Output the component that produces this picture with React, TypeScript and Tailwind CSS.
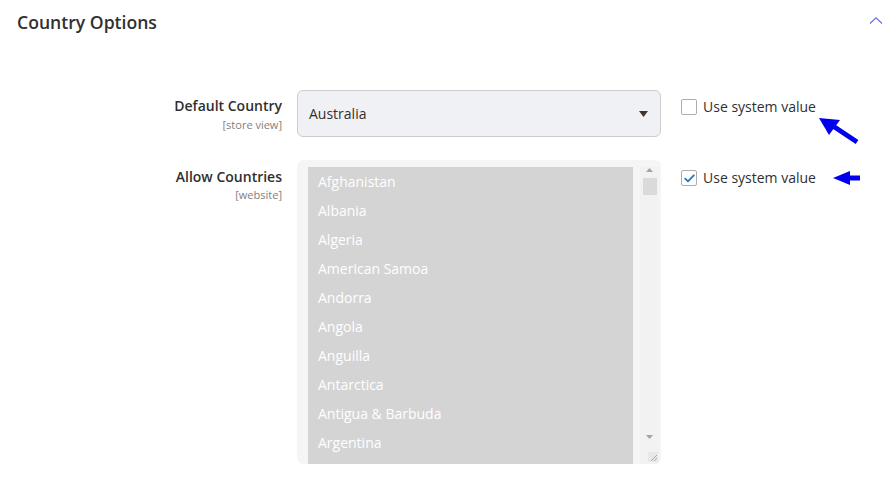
import React from "react";

const countries = [
  "Afghanistan",
  "Albania",
  "Algeria",
  "American Samoa",
  "Andorra",
  "Angola",
  "Anguilla",
  "Antarctica",
  "Antigua & Barbuda",
  "Argentina",
];

function Checkbox({ checked }: { checked?: boolean }) {
  return (
    <span className="flex h-4 w-4 items-center justify-center rounded-[2px] border border-[#adadad] bg-white">
      {checked && (
        <svg width="11" height="9" viewBox="0 0 11 9" fill="none">
          <path d="M1.2 4.6 L4 7.3 L9.8 1.3" stroke="#1979c3" strokeWidth="1.8" strokeLinecap="round" strokeLinejoin="round" />
        </svg>
      )}
    </span>
  );
}

function SystemValue({ checked }: { checked?: boolean }) {
  return (
    <label className="flex items-center gap-[6px] text-[14px] leading-[18px] text-[#303030]">
      <Checkbox checked={checked} />
      Use system value
    </label>
  );
}

export default function App() {
  return (
    <div className="relative h-[481px] w-[894px] overflow-hidden bg-white font-['Open_Sans',sans-serif]">
      {/* Section header */}
      <div className="flex h-[44px] items-center justify-between pl-[17px] pr-[10px]">
        <h2 className="text-[17.6px] font-semibold text-[#303030]">Country Options</h2>
        <svg width="16" height="10" viewBox="0 0 16 10" className="mt-[-2px]">
          <path d="M2 7.5 L8 1.8 L14 7.5" stroke="#6b6bf0" strokeWidth="1.2" fill="none" />
        </svg>
      </div>

      <div className="mt-[46px] flex flex-col gap-[23px]">
        {/* Default Country */}
        <div className="flex items-start">
          <div className="w-[282px] pt-[7px] text-right">
            <div className="text-[14px] font-semibold leading-[18px] text-[#303030]">Default Country</div>
            <div className="mt-[2px] text-[11px] leading-[15px] text-[#808080]">[store view]</div>
          </div>
          <div className="ml-[15px] flex h-[47px] w-[364px] items-center justify-between rounded-[6px] border border-[#cccccc] bg-[#f0f1f5] pl-[11px] pr-[12px]">
            <span className="text-[14px] text-[#303030]">Australia</span>
            <svg width="9" height="6" viewBox="0 0 9 6">
              <path d="M0 0 H9 L4.5 6 Z" fill="#41362f" />
            </svg>
          </div>
          <div className="ml-[20px] pt-[8px]">
            <SystemValue />
          </div>
        </div>

        {/* Allow Countries */}
        <div className="flex items-start">
          <div className="w-[282px] pt-[8px] text-right">
            <div className="text-[14px] font-semibold leading-[18px] text-[#303030]">Allow Countries</div>
            <div className="mt-[1px] text-[11px] leading-[15px] text-[#808080]">[website]</div>
          </div>
          <div className="ml-[15px] flex h-[304px] w-[364px] overflow-hidden rounded-[6px] bg-[#f5f5f5] pl-[11px] pt-[7px]">
            <ul className="w-[325px] bg-[#d4d4d4]">
              {countries.map((c) => (
                <li key={c} className="h-[29px] pl-[10px] pt-[4px] text-[14px] leading-[21px] text-white">
                  {c}
                </li>
              ))}
            </ul>
            <div className="ml-[7px] flex w-[19px] flex-col items-center bg-[#f2f2f2]">
              <svg width="7" height="4" viewBox="0 0 7 4" className="mt-[1px]">
                <path d="M0 4 L3.5 0 L7 4 Z" fill="#a3a3a3" />
              </svg>
              <div className="mt-[6px] h-[17px] w-[14px] bg-[#dadada]" />
              <div className="flex-1" />
              <svg width="7" height="4" viewBox="0 0 7 4" className="mb-[13px]">
                <path d="M0 0 H7 L3.5 4 Z" fill="#a3a3a3" />
              </svg>
              <svg width="10" height="10" viewBox="0 0 10 10" className="mb-[2px] ml-[6px] bg-[#e8e8e8]">
                <path d="M9 3 L3 9 M9 6 L6 9" stroke="#9a9a9a" strokeWidth="0.8" />
              </svg>
            </div>
          </div>
          <div className="ml-[20px] pt-[9px]">
            <SystemValue checked />
          </div>
        </div>
      </div>

      {/* Annotation arrows */}
      <svg className="pointer-events-none absolute left-0 top-0" width="894" height="481" viewBox="0 0 894 481">
        <path d="M857 142 L833 126" stroke="#0000ee" strokeWidth="5" strokeLinecap="butt" />
        <path d="M819 118 L840 120 L829 135 Z" fill="#0000ee" />
        <path d="M847 178 H860" stroke="#0000ee" strokeWidth="5" />
        <path d="M833 178 L850 171 L850 185 Z" fill="#0000ee" />
      </svg>
    </div>
  );
}
